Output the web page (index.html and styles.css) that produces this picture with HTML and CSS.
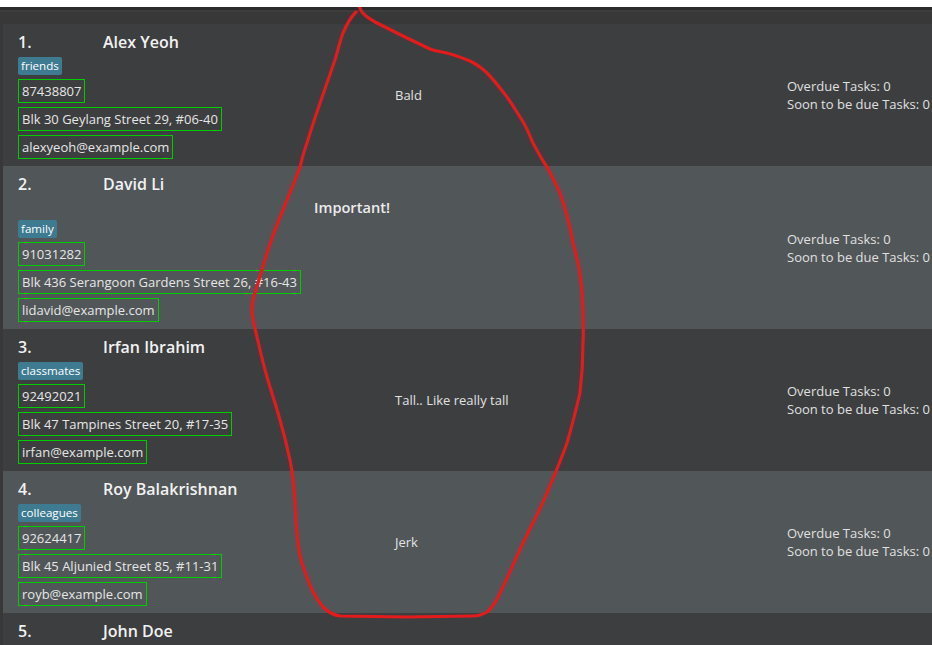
FILE: index.html
```html
<!DOCTYPE html>
<html>
<head>
<meta charset="utf-8">
<link rel="stylesheet" href="styles.css">
</head>
<body>
<div class="app">
  <div class="topline"></div>
  <div class="panel">
    <div class="card dark">
      <div class="info">
        <div class="name-row"><span class="idx">1.</span><span class="name">Alex Yeoh</span></div>
        <div class="tags"><span class="tag">friends</span></div>
        <div class="field">87438807</div>
        <div class="field">Blk 30 Geylang Street 29, #06-40</div>
        <div class="field">alexyeoh@example.com</div>
      </div>
      <div class="remark">Bald</div>
      <div class="tasks"><div>Overdue Tasks: 0</div><div>Soon to be due Tasks: 0</div></div>
    </div>
    <div class="card light">
      <div class="info">
        <div class="name-row"><span class="idx">2.</span><span class="name">David Li</span></div>
        <div class="remark-big">Important!</div>
        <div class="tags"><span class="tag">family</span></div>
        <div class="field">91031282</div>
        <div class="field">Blk 436 Serangoon Gardens Street 26, #16-43</div>
        <div class="field">lidavid@example.com</div>
      </div>
      <div class="remark"></div>
      <div class="tasks"><div>Overdue Tasks: 0</div><div>Soon to be due Tasks: 0</div></div>
    </div>
    <div class="card dark">
      <div class="info">
        <div class="name-row"><span class="idx">3.</span><span class="name">Irfan Ibrahim</span></div>
        <div class="tags"><span class="tag">classmates</span></div>
        <div class="field">92492021</div>
        <div class="field">Blk 47 Tampines Street 20, #17-35</div>
        <div class="field">irfan@example.com</div>
      </div>
      <div class="remark">Tall.. Like really tall</div>
      <div class="tasks"><div>Overdue Tasks: 0</div><div>Soon to be due Tasks: 0</div></div>
    </div>
    <div class="card light">
      <div class="info">
        <div class="name-row"><span class="idx">4.</span><span class="name">Roy Balakrishnan</span></div>
        <div class="tags"><span class="tag">colleagues</span></div>
        <div class="field">92624417</div>
        <div class="field">Blk 45 Aljunied Street 85, #11-31</div>
        <div class="field">royb@example.com</div>
      </div>
      <div class="remark">Jerk</div>
      <div class="tasks"><div>Overdue Tasks: 0</div><div>Soon to be due Tasks: 0</div></div>
    </div>
    <div class="card dark">
      <div class="info">
        <div class="name-row"><span class="idx">5.</span><span class="name">John Doe</span></div>
      </div>
    </div>
  </div>
  <svg class="scribble" width="932" height="645" viewBox="0 0 932 645">
    <path d="M357,3 L362,12 C366,17 370,19 375,22 L405,37 L430,49 C435,51 438,51 442,52 C450,53 460,57 470,61 C478,65 482,68 487,73 C495,81 500,88 507,97 C514,107 518,114 522,120 C527,128 530,136 533,143 C538,152 542,160 547,167 C552,176 556,184 560,193 C566,210 570,226 573,243 C578,260 581,276 582,293 C583,310 584,326 583,343 C583,360 582,376 580,393 C576,410 572,426 567,443 C561,460 554,476 547,493 C540,510 531,526 523,543 C515,560 508,577 500,593 C496,602 492,608 487,612 C482,615 478,616 473,616 L407,617 L340,616 C332,615 327,611 323,607 C315,597 310,587 307,577 C302,565 299,554 298,543 C296,530 296,516 295,503 C294,488 293,474 290,460 C287,446 284,434 280,420 C276,405 271,391 267,377 C263,363 260,350 257,337 C255,328 252,319 252,310 C252,303 253,298 255,293 C259,280 263,266 267,253 C272,238 277,224 283,210 C289,195 295,181 300,167 C302,159 304,151 307,143 C313,123 320,103 327,83 C330,75 332,68 335,60 C338,50 340,41 343,33 C346,26 351,17 356,12" fill="none" stroke="#e31b1d" stroke-width="3.2" stroke-linecap="round" stroke-linejoin="round"/>
  </svg>
</div>
</body>
</html>
```
FILE: styles.css
```css
html, body {
  margin: 0;
  padding: 0;
  background: #ffffff;
}
body {
  font-family: "Open Sans", "Noto Sans", sans-serif;
  width: 932px;
  height: 645px;
  overflow: hidden;
}
.app {
  position: relative;
  margin-top: 7px;
  height: 638px;
  background: #383838;
  overflow: hidden;
}
.topline {
  height: 3px;
  background: #2b2b2b;
  border-bottom: 2px solid #3d3d3d;
}
.panel {
  padding-top: 12px;
  padding-left: 3px;
}
.card {
  display: grid;
  grid-template-columns: 377px 392px 1fr;
  padding: 7px 0 7px 15px;
  white-space: nowrap;
  overflow: hidden;
}
.card.dark { background: #3c3e3f; }
.card.light { background: #515658; }
.info {
  display: flex;
  flex-direction: column;
  gap: 4px;
  align-items: flex-start;
}
.name-row {
  display: flex;
  height: 22px;
  align-items: center;
  font-size: 16px;
  font-weight: 600;
  color: #f2f2f2;
}
.idx { width: 85px; }
.remark-big {
  height: 17px;
  line-height: 17px;
  margin-left: 296px;
  font-size: 14.6px;
  font-weight: 600;
  color: #ececec;
}
.tags { display: flex; gap: 4px; }
.tag {
  height: 18px;
  line-height: 18px;
  padding: 0 3px;
  background: #3e7b91;
  color: #ffffff;
  font-size: 11.6px;
  border-radius: 2px;
}
.field {
  box-sizing: border-box;
  height: 24px;
  line-height: 22px;
  padding: 0 3px;
  border: 1px solid #00cc00;
  font-size: 13px;
  color: #e6e6e6;
}
.remark {
  align-self: center;
  font-size: 13px;
  color: #e2e2e2;
}
.tasks {
  align-self: center;
  font-size: 13px;
  line-height: 18px;
  color: #e0e0e0;
}
.scribble {
  position: absolute;
  left: 0;
  top: -7px;
  pointer-events: none;
}
```
